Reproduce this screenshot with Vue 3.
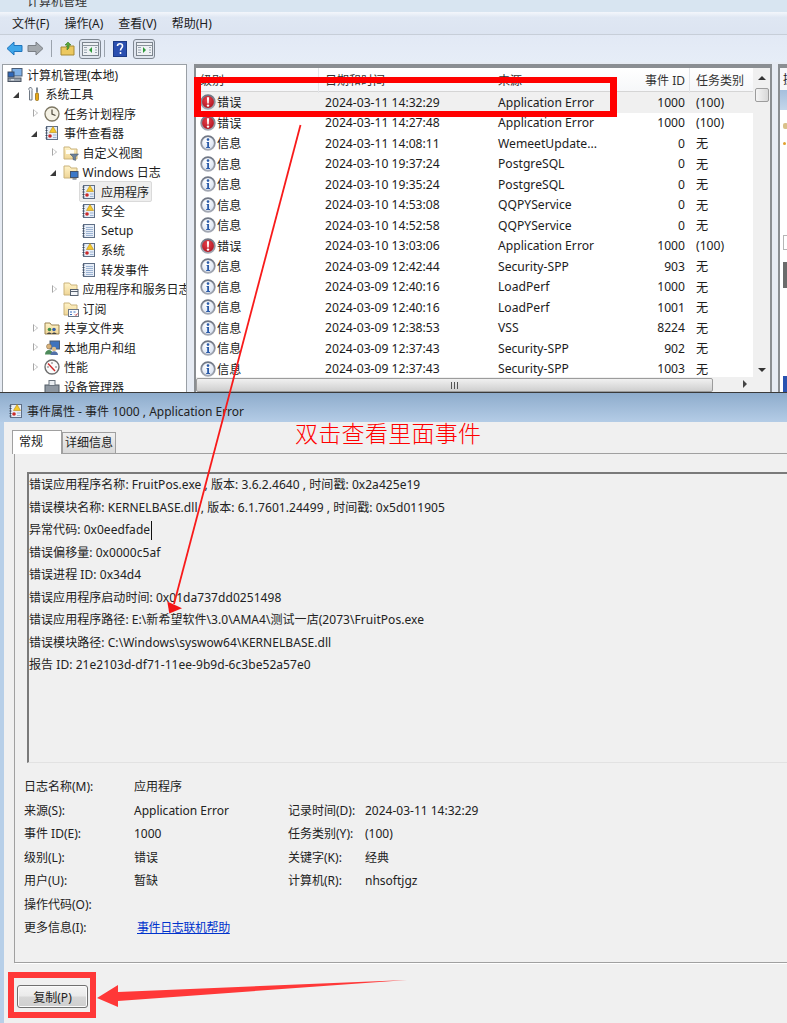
<script setup>
const tree = [
  { n: 0, arrow: '', icon: 'computer', text: '计算机管理(本地)' },
  { n: 1, arrow: 'open', icon: 'tools', text: '系统工具' },
  { n: 2, arrow: 'closed', icon: 'clock', text: '任务计划程序' },
  { n: 2, arrow: 'open', icon: 'logwarn', text: '事件查看器' },
  { n: 3, arrow: 'closed', icon: 'folderf', text: '自定义视图' },
  { n: 3, arrow: 'open', icon: 'folderw', text: 'Windows 日志' },
  { n: 4, arrow: '', icon: 'logwarn', text: '应用程序', selected: true },
  { n: 4, arrow: '', icon: 'logwarn', text: '安全' },
  { n: 4, arrow: '', icon: 'log', text: 'Setup' },
  { n: 4, arrow: '', icon: 'logwarn', text: '系统' },
  { n: 4, arrow: '', icon: 'log', text: '转发事件' },
  { n: 3, arrow: 'closed', icon: 'folderp', text: '应用程序和服务日志' },
  { n: 3, arrow: '', icon: 'folders', text: '订阅' },
  { n: 2, arrow: 'closed', icon: 'share', text: '共享文件夹' },
  { n: 2, arrow: 'closed', icon: 'users', text: '本地用户和组' },
  { n: 2, arrow: 'closed', icon: 'perf', text: '性能' },
  { n: 2, arrow: '', icon: 'device', text: '设备管理器' }
]
const E = '错误', I = '信息', A = 'Application Error', N = '无', H = '(100)'
const rows = [
  [E, '2024-03-11 14:32:29', A, 1000, H],
  [E, '2024-03-11 14:27:48', A, 1000, H],
  [I, '2024-03-11 14:08:11', 'WemeetUpdate...', 0, N],
  [I, '2024-03-10 19:37:24', 'PostgreSQL', 0, N],
  [I, '2024-03-10 19:35:24', 'PostgreSQL', 0, N],
  [I, '2024-03-10 14:53:08', 'QQPYService', 0, N],
  [I, '2024-03-10 14:52:58', 'QQPYService', 0, N],
  [E, '2024-03-10 13:03:06', A, 1000, H],
  [I, '2024-03-09 12:42:44', 'Security-SPP', 903, N],
  [I, '2024-03-09 12:40:16', 'LoadPerf', 1000, N],
  [I, '2024-03-09 12:40:16', 'LoadPerf', 1001, N],
  [I, '2024-03-09 12:38:53', 'VSS', 8224, N],
  [I, '2024-03-09 12:37:43', 'Security-SPP', 902, N],
  [I, '2024-03-09 12:37:43', 'Security-SPP', 1003, N]
]
const lines = [
  '错误应用程序名称: FruitPos.exe , 版本: 3.6.2.4640 , 时间戳: 0x2a425e19',
  '错误模块名称: KERNELBASE.dll , 版本: 6.1.7601.24499 , 时间戳: 0x5d011905',
  '异常代码: 0x0eedfade',
  '错误偏移量: 0x0000c5af',
  '错误进程 ID: 0x34d4',
  '错误应用程序启动时间: 0x01da737dd0251498',
  '错误应用程序路径: E:\\新希望软件\\3.0\\AMA4\\测试一店(2073\\FruitPos.exe',
  '错误模块路径: C:\\Windows\\syswow64\\KERNELBASE.dll',
  '报告 ID: 21e2103d-df71-11ee-9b9d-6c3be52a57e0'
]
const fields = [
  ['日志名称(M):', '应用程序', '', ''],
  ['来源(S):', A, '记录时间(D):', '2024-03-11 14:32:29'],
  ['事件 ID(E):', '1000', '任务类别(Y):', H],
  ['级别(L):', E, '关键字(K):', '经典'],
  ['用户(U):', '暂缺', '计算机(R):', 'nhsoftjgz'],
  ['操作代码(O):', '', '', '']
]
</script>

<template>
  <div class="page">
    <svg class="sprites" width="0" height="0" aria-hidden="true">
      <defs>
        <radialGradient id="gi" cx="40%" cy="35%" r="70%"><stop offset="0" stop-color="#ffffff"/><stop offset="1" stop-color="#d5dff0"/></radialGradient>
        <radialGradient id="ge" cx="45%" cy="35%" r="70%"><stop offset="0" stop-color="#e8404a"/><stop offset="1" stop-color="#a80f1c"/></radialGradient>
        <linearGradient id="gf" x1="0" y1="0" x2="0" y2="1"><stop offset="0" stop-color="#fff3c8"/><stop offset="1" stop-color="#efd596"/></linearGradient>
        <linearGradient id="gr" x1="0" y1="0" x2="0" y2="1"><stop offset="0" stop-color="#6f7684"/><stop offset="1" stop-color="#a4a9b4"/></linearGradient>
      </defs>
      <symbol id="s-info" viewBox="0 0 16 16">
        <circle cx="8" cy="8" r="6.800" fill="url(#gi)" stroke="url(#gr)" stroke-width="1.800"/>
        <circle cx="8" cy="4.600" r="1.300" fill="#2a5aa8"/>
        <path d="M6.600 7h2.400v5h1v1H6.200v-1h1V8H6.600z" fill="#2a5aa8"/>
      </symbol>
      <symbol id="s-error" viewBox="0 0 16 16">
        <circle cx="8" cy="8" r="6.800" fill="url(#ge)" stroke="url(#gr)" stroke-width="1.800"/>
        <path d="M6.900 3.200h2.200L8.700 9.400H7.300z" fill="#fff"/>
        <circle cx="8" cy="11.600" r="1.200" fill="#fff"/>
      </symbol>
      <symbol id="s-log" viewBox="0 0 16 16">
        <rect x="2.500" y="1.500" width="11" height="13" fill="#e6edf7" stroke="#5f6f86"/>
        <path d="M1.500 3h2M1.500 5.500h2M1.500 8h2M1.500 10.500h2M1.500 13h2" stroke="#39465a"/>
        <path d="M5 4.500h7M5 6.500h7M5 8.500h7M5 10.500h7M5 12.500h7" stroke="#9db4d3"/>
      </symbol>
      <symbol id="s-logwarn" viewBox="0 0 16 16">
        <rect x="2.500" y="1.500" width="11" height="13" fill="#e6edf7" stroke="#5f6f86"/>
        <path d="M1.500 3h2M1.500 5.500h2M1.500 8h2M1.500 10.500h2M1.500 13h2" stroke="#39465a"/>
        <path d="M9 1.500l3.500 6h-7z" fill="#f4c92c" stroke="#b98a12" stroke-width=".6"/>
        <circle cx="6" cy="11" r="1.800" fill="#c92a2a"/>
        <path d="M9 10h3.500M9 12.500h3.500" stroke="#9db4d3"/>
      </symbol>
      <symbol id="s-folderf" viewBox="0 0 16 16">
        <path d="M1 2h5.500L8 4h6v10H1z" fill="url(#gf)" stroke="#c9b27a"/>
        <path d="M3 5h8v4H3z" fill="#fffdf3"/>
        <path d="M7 9h8.500l-3 3v3.500l-2.500-1V12z" fill="#6d8299" stroke="#3e4f60" stroke-width=".5"/>
      </symbol>
      <symbol id="s-folderw" viewBox="0 0 16 16">
        <path d="M1 2h5.500L8 4h6v10H1z" fill="url(#gf)" stroke="#c9b27a"/>
        <rect x="7.500" y="7.500" width="7.500" height="6" fill="#3c78c8" stroke="#44526a"/>
        <path d="M9.500 15h4" stroke="#44526a"/>
      </symbol>
      <symbol id="s-folderp" viewBox="0 0 16 16">
        <path d="M1 2h5.500L8 4h6v10H1z" fill="url(#gf)" stroke="#c9b27a"/>
        <rect x="7.500" y="8.500" width="7.500" height="6" fill="#f2f4f7" stroke="#55606e"/>
        <path d="M7.500 10.500h7.500" stroke="#55606e"/>
      </symbol>
      <symbol id="s-folders" viewBox="0 0 16 16">
        <path d="M1 2h5.500L8 4h6v10H1z" fill="url(#gf)" stroke="#c9b27a"/>
        <rect x="5.500" y="8.500" width="10" height="7" fill="#fbfbfd" stroke="#6d7787"/>
        <path d="M7 11h2M10.500 11h2M7 13.500h2" stroke="#3a6fc0"/>
        <path d="M12 13.500l1 1 1.500-2" stroke="#c03a3a" fill="none"/>
      </symbol>
      <symbol id="s-computer" viewBox="0 0 16 16">
        <rect x="5" y="1.500" width="10" height="7.500" fill="#7fb0e6" stroke="#4a5c75"/>
        <rect x="1" y="5" width="6" height="5" fill="#2f67b8" stroke="#3d4b60"/>
        <rect x="1" y="11" width="13" height="3.500" fill="#9aa3ae" stroke="#4a5463"/>
        <path d="M4 12.800h3" stroke="#eef1f5"/>
      </symbol>
      <symbol id="s-tools" viewBox="0 0 16 16">
        <path d="M4 1.500c2 0 2.500 1.500 2 3v9.500H3.500V4.500C2.500 3.500 2.500 2 4 1.500z" fill="#f4f6f8" stroke="#6f7884"/>
        <path d="M11 1.500v5" stroke="#7f8a96" stroke-width="2"/>
        <rect x="9.500" y="7" width="3" height="7.500" rx="1" fill="#e8a916" stroke="#8a6410" stroke-width=".7"/>
      </symbol>
      <symbol id="s-clock" viewBox="0 0 16 16">
        <circle cx="8" cy="8" r="7" fill="#f4f1e4" stroke="#7d7763" stroke-width="1.300"/>
        <path d="M8 3.500V8l3.500 1.500" fill="none" stroke="#4e4a3d" stroke-width="1.200"/>
      </symbol>
      <symbol id="s-share" viewBox="0 0 16 16">
        <path d="M1 3h5l1.500 2H15v9H1z" fill="url(#gf)" stroke="#9b8350"/>
        <circle cx="5.500" cy="9.500" r="1.800" fill="#3f8f4a"/>
        <circle cx="10" cy="9.500" r="1.800" fill="#355fa8"/>
        <path d="M3 14c.5-2 4-2 4.500 0M8 14c.5-2 4-2 4.500 0" fill="#444"/>
      </symbol>
      <symbol id="s-users" viewBox="0 0 16 16">
        <rect x="6" y="1" width="9.500" height="8" fill="#3f73bd" stroke="#4a5c75"/>
        <circle cx="5" cy="6.500" r="2.500" fill="#d9b27a" stroke="#7a6240" stroke-width=".5"/>
        <path d="M1 14.500c0-6 8-6 8 0z" fill="#4d8a5a"/>
        <circle cx="10" cy="9" r="2.200" fill="#e0c08c"/>
        <path d="M6.500 15c0-5 7.500-5 7.500 0z" fill="#5472a8"/>
      </symbol>
      <symbol id="s-perf" viewBox="0 0 16 16">
        <circle cx="8" cy="8" r="7" fill="#fafafa" stroke="#6e6e6e" stroke-width="1.400"/>
        <path d="M4 4.500L11 12" stroke="#d02a2a" stroke-width="1.400"/>
        <path d="M8 3v2M3 8h2M13 8h-2" stroke="#777"/>
      </symbol>
      <symbol id="s-device" viewBox="0 0 16 16">
        <rect x="1" y="6" width="14" height="9" fill="#8f98a2" stroke="#515a64"/>
        <rect x="5" y="1.500" width="6" height="5" fill="#e9edf1" stroke="#6b747e"/>
      </symbol>
    </svg>

    <div class="title">计算机管理</div>

    <nav class="menu">
      <span>文件(F)</span><span>操作(A)</span><span>查看(V)</span><span>帮助(H)</span>
    </nav>

    <div class="toolbar">
      <svg class="tool" width="17" height="15" viewBox="0 0 17 15"><path d="M1 7.500L8 1v3.500h8v6H8V14z" fill="#3ea6ea" stroke="#1f74bd"/></svg>
      <svg class="tool" width="17" height="15" viewBox="0 0 17 15"><path d="M16 7.500L9 1v3.500H1v6h8V14z" fill="#a3a8ad" stroke="#7a7f85"/></svg>
      <i class="tsep"></i>
      <svg class="tool" width="15" height="15" viewBox="0 0 15 15"><path d="M1 6h5l1-1h7v9H1z" fill="#ecc85f" stroke="#a78a35"/><path d="M7 9V4H5l3-3 3 3H9v3z" fill="#5aa83a" stroke="#3a7a24" stroke-width=".6"/></svg>
      <span class="tbtn"><svg width="17" height="14" viewBox="0 0 17 14"><rect x=".5" y=".5" width="16" height="13" fill="#eef1f4" stroke="#7d858e"/><path d="M.5 3.500h16" stroke="#8a929b"/><path d="M2 5.500h3M2 8h3M2 10.500h3M13 5.500h2M13 8h2M13 10.500h2" stroke="#9aa6b2"/><path d="M10 5v6L7 8z" fill="#2f9a3a"/></svg></span>
      <i class="tsep"></i>
      <svg class="tool help" width="14" height="16" viewBox="0 0 14 16"><rect x=".5" y=".5" width="13" height="15" fill="#2a4fb0" stroke="#1c3a85"/><path d="M4.500 5c0-3 5-3 5 0 0 2-2 2-2 4.500M7.500 11v2" fill="none" stroke="#fff" stroke-width="1.600"/></svg>
      <span class="tbtn"><svg width="17" height="14" viewBox="0 0 17 14"><rect x=".5" y=".5" width="16" height="13" fill="#eef1f4" stroke="#7d858e"/><path d="M.5 3.500h16" stroke="#8a929b"/><path d="M2 5.500h3M2 8h3M2 10.500h3M13 5.500h2M13 8h2M13 10.500h2" stroke="#9aa6b2"/><path d="M7 5v6l3-3z" fill="#2f9a3a"/></svg></span>
    </div>

    <div class="panes">
      <aside class="tree">
        <div v-for="row in tree" :key="row.text" class="node" :style="{ marginLeft: 4 + row.n * 18.5 + 'px' }">
          <i v-if="row.arrow" class="arrow" :class="row.arrow"></i>
          <span class="node-in" :class="{ sel: row.selected }">
            <svg class="nicon" width="16" height="16"><use :href="'#s-' + row.icon"/></svg>
            <span>{{ row.text }}</span>
          </span>
        </div>
      </aside>

      <section class="list">
        <div class="list-main">
          <div class="thead">
            <span class="c1 th">级别</span>
            <span class="c2 th">日期和时间</span>
            <span class="c3 th">来源</span>
            <span class="c4 th">事件 ID</span>
            <span class="c5 th">任务类别</span>
          </div>
          <div class="tbody">
            <div v-for="(r, i) in rows" :key="i" class="tr" :class="{ on: i === 0 }">
              <span class="c1 lvl">
                <svg width="16" height="16"><use :href="r[0] === '错误' ? '#s-error' : '#s-info'"/></svg>{{ r[0] }}
              </span>
              <span class="c2">{{ r[1] }}</span>
              <span class="c3">{{ r[2] }}</span>
              <span class="c4">{{ r[3] }}</span>
              <span class="c5">{{ r[4] }}</span>
            </div>
          </div>
          <div class="hscroll">
            <div class="hthumb"><i class="grip"></i></div>
            <i class="tri-r"></i>
          </div>
        </div>
        <div class="vscroll">
          <i class="tri-u"></i>
          <div class="vthumb"></div>
          <i class="tri-d"></i>
        </div>
      </section>

      <aside class="actions">
        <div class="ahead">操作</div>
        <div class="asel"></div>
        <i class="adot a1"></i>
        <i class="adot a3"></i>
        <i class="abox"></i>
        <i class="adot a2"></i>
        <i class="ablue"></i>
      </aside>
    </div>

    <div class="dialog">
      <div class="dtitle">
        <svg width="16" height="16"><use href="#s-logwarn"/></svg>
        <span>事件属性 - 事件 1000 , Application Error</span>
      </div>
      <div class="dbody">
        <div class="tabs">
          <span class="tab active">常规</span>
          <span class="tab">详细信息</span>
        </div>
        <div class="panel">
          <div class="desc">
            <div v-for="(l, i) in lines" :key="i" class="dline">{{ l }}<i v-if="i === 2" class="caret"></i></div>
          </div>
          <div class="fields">
            <div v-for="f in fields" :key="f[0]" class="frow">
              <span class="f1">{{ f[0] }}</span>
              <span class="f2">{{ f[1] }}</span>
              <span class="f3">{{ f[2] }}</span>
              <span>{{ f[3] }}</span>
            </div>
            <div class="frow">
              <span class="f1">更多信息(I):</span>
              <a class="link">事件日志联机帮助</a>
            </div>
          </div>
        </div>
        <div class="foot">
          <button class="copy" type="button">复制(P)</button>
        </div>
      </div>
    </div>

    <!-- annotations drawn over the screenshot -->
    <div class="redbox box1"></div>
    <div class="redbox box2"></div>
    <div class="note">双击查看里面事件</div>
    <svg class="marks" width="787" height="1023" viewBox="0 0 787 1023">
      <path d="M300.500 125L174 604" stroke="#f81a1a" stroke-width="1.800" fill="none"/>
      <path d="M169.300 613.500L167.300 601.500L182 608.300z" fill="#f31515"/>
      <path d="M97 998L118 985L118 992L407 980L118 1001L118 1007z" fill="#ff3838"/>
    </svg>
  </div>
</template>

<style>
html, body { margin: 0; background: #b7cfe8; }
</style>

<style scoped>
.page {
  position: relative;
  width: 787px;
  height: 1023px;
  overflow: hidden;
  display: flex;
  flex-direction: column;
  font-family: "Noto Sans", "Noto Sans CJK SC", sans-serif;
  font-size: 12px;
  color: #1c1c1c;
  background: #b7cfe8;
}
.sprites { position: absolute; }
.title {
  height: 12px;
  line-height: 4px;
  padding-left: 27px;
  background: #d8e5f1;
  color: #333;
  overflow: hidden;
  flex: none;
}
.menu {
  flex: none;
  height: 23px;
  display: flex;
  align-items: center;
  gap: 15px;
  padding-left: 12px;
  background: linear-gradient(#f3f6fb 0, #dfe7f3 25%, #dce4f1 100%);
  border-bottom: 1px solid #c7ced8;
  box-sizing: border-box;
}
.toolbar {
  flex: none;
  height: 27px;
  display: flex;
  align-items: center;
  padding-left: 6px;
  background: linear-gradient(#e2e9f5, #e6edf7);
  box-sizing: border-box;
}
.tool { margin-right: 4px; flex: none; }
.tool.help { margin-right: 6px; }
.tsep { width: 1px; height: 17px; background: #9ba3ad; margin: 0 8px 0 3px; flex: none; }
.tbtn {
  width: 22px; height: 20px; flex: none;
  box-sizing: border-box;
  border: 1px solid #7f8791; border-radius: 3px;
  background: #dfe5ee;
  display: flex; align-items: center; justify-content: center;
}
.panes {
  flex: none;
  height: 331px;
  display: flex;
  box-sizing: border-box;
  padding: 2px 0 0 2px;
  background: #e6ebf3;
  border-bottom: 1px solid #3a3a3a;
  overflow: hidden;
}
.tree {
  flex: none;
  width: 185px;
  height: 100%;
  box-sizing: border-box;
  border: 1px solid #9aa0a6;
  border-bottom: 0;
  background: #fff;
  overflow: hidden;
}
.node { position: relative; height: 19.500px; display: flex; align-items: center; white-space: nowrap; }
.node-in { display: inline-flex; align-items: center; gap: 4px; height: 19px; }
.node-in.sel {
  background: #eeeeee;
  border: 1px solid #dadada;
  border-radius: 2px;
  margin: 0 0 0 -2px;
  padding: 0 2px 0 1px;
  box-sizing: border-box;
  height: 21px;
}
.arrow { position: absolute; left: -13px; top: 5px; width: 0; height: 0; }
.arrow.closed {
  left: -11px;
  border-left: 5px solid #a6a6a6;
  border-top: 4.500px solid transparent;
  border-bottom: 4.500px solid transparent;
}
.arrow.closed::after {
  content: "";
  position: absolute;
  left: -4px; top: -3px;
  border-left: 3px solid #fff;
  border-top: 3px solid transparent;
  border-bottom: 3px solid transparent;
}
.arrow.open {
  top: 7px;
  border-right: 6px solid #3a3a3a;
  border-top: 6px solid transparent;
}
.nicon { flex: none; }
.list {
  flex: none;
  width: 578px;
  height: 100%;
  margin-left: 7px;
  display: flex;
  box-sizing: border-box;
  border-style: solid;
  border-width: 4px 2px 0 2px;
  border-color: #8a8e92;
  background: #fff;
  overflow: hidden;
}
.list-main { flex: none; width: 557px; display: flex; flex-direction: column; }
.thead {
  flex: none;
  height: 24px;
  display: flex;
  align-items: center;
  background: linear-gradient(#ffffff, #f6f7f9);
  border-bottom: 1px solid #d5d5d5;
  box-sizing: border-box;
  color: #333;
}
.th { position: relative; line-height: 24px; padding-top: 2px; }
.c1 { flex: none; width: 129px; padding-left: 4px; box-sizing: border-box; white-space: nowrap; }
.c2 { flex: none; width: 173px; white-space: nowrap; }
.c3 { flex: none; width: 130px; white-space: nowrap; }
.c4 { flex: none; width: 57px; text-align: right; white-space: nowrap; }
.c5 { flex: none; width: 68px; padding-left: 11px; box-sizing: border-box; white-space: nowrap; }
.th.c1::after, .th.c4::after {
  content: ""; position: absolute; top: 0; bottom: 0; width: 1px; background: #e3e5e8;
}
.th.c1::after { left: 122px; }
.th.c4::after { right: -5px; }
.tbody { flex: 1; overflow: hidden; font-size: 12.150px; }
.tr { height: 20.500px; display: flex; align-items: center; }
.tr.on { background: #f0f0f0; }
.lvl { display: inline-flex; align-items: center; gap: 1px; }
.hscroll {
  flex: none;
  position: relative;
  height: 15px;
  background: #f0f0f0;
}
.hthumb {
  width: 517px;
  height: 14px;
  margin-top: 1px;
  box-sizing: border-box;
  border: 1px solid #9c9c9c;
  border-radius: 2px;
  background: linear-gradient(#f0f0f0, #cfcfcf);
  display: flex;
  justify-content: center;
  align-items: center;
}
.grip { width: 7px; height: 7px; background: repeating-linear-gradient(90deg, #555 0 1px, transparent 1px 3px); }
.tri-r {
  position: absolute; right: 6px; top: 3px;
  border-left: 4px solid #444;
  border-top: 4px solid transparent;
  border-bottom: 4px solid transparent;
}
.vscroll {
  flex: none;
  width: 17px;
  position: relative;
  background: #f0f0f0;
}
.tri-u, .tri-d { position: absolute; left: 5px; }
.tri-u { top: 8px; border-bottom: 4px solid #333; border-left: 4px solid transparent; border-right: 4px solid transparent; }
.tri-d { top: 300px; border-top: 4px solid #333; border-left: 4px solid transparent; border-right: 4px solid transparent; }
.vthumb {
  position: absolute;
  left: 2px; top: 20px;
  width: 14px; height: 14px;
  box-sizing: border-box;
  border: 1px solid #9c9c9c;
  border-radius: 2px;
  background: linear-gradient(90deg, #f5f5f5, #d8d8d8);
}
.actions {
  flex: none;
  position: relative;
  width: 20px;
  height: 100%;
  margin-left: 6px;
  box-sizing: border-box;
  border-style: solid;
  border-color: #8a8e92;
  border-width: 4px 0 0 2px;
  background: #fff;
}
.ahead { height: 22px; line-height: 24px; padding-left: 3px; color: #222; background: #f7f8fa; white-space: nowrap; overflow: hidden; }
.asel { height: 20px; background: linear-gradient(#a5bfdd, #c3d6ea); }
.adot { position: absolute; left: 3px; width: 5px; height: 6px; border-radius: 2px; }
.a1 { top: 55px; background: #d8c08a; }
.a3 { top: 74px; width: 3px; height: 3px; background: #e0a030; }
.abox { position: absolute; left: 3px; top: 167px; width: 6px; height: 15px; box-sizing: border-box; border: 1px solid #b5b5b5; }
.a2 { top: 194px; background: #6b6b6b; height: 26px; border-radius: 0; }
.ablue { position: absolute; left: 3px; bottom: 0; width: 6px; height: 16px; background: #2a53b0; }
.dialog { flex: none; display: flex; flex-direction: column; height: 630px; }
.dtitle {
  flex: none;
  height: 29px;
  box-sizing: border-box;
  padding-top: 7px;
  display: flex;
  align-items: center;
  gap: 3px;
  padding-left: 8px;
  color: #222;
  background: linear-gradient(#8eaccc, #b4cce6);
}
.dbody {
  flex: 1;
  margin-left: 4px;
  box-sizing: border-box;
  background: #f0f0f0;
  display: flex;
  flex-direction: column;
  padding: 8px 0 0 8px;
}
.tabs { display: flex; align-items: flex-end; height: 23px; flex: none; }
.tab {
  box-sizing: border-box;
  width: 54px;
  height: 21px;
  line-height: 20px;
  text-align: center;
  background: linear-gradient(#f0f0f0, #d8d8d8);
  border: 1px solid #a0a0a0;
  border-bottom: 0;
}
.tab.active {
  width: 50px;
  height: 24px;
  line-height: 22px;
  background: #fff;
  margin-bottom: -1px;
  position: relative;
  z-index: 1;
  padding-right: 12px;
}
.panel {
  box-sizing: border-box;
  height: 510px;
  margin-left: 2px;
  margin-right: -20px;
  border: 1px solid #a0a0a0;
  background: #f0f0f0;
  padding: 18px 0 0 12px;
  box-shadow: 1px 1px 0 #fff;
}
.desc {
  box-sizing: border-box;
  height: 291px;
  border: 2px solid #7a7a7a;
  border-right: 0;
  border-bottom: 1px solid #e2e2e2;
  letter-spacing: .05px;
}
.dline { height: 22.500px; line-height: 22.500px; white-space: nowrap; position: relative; color: #222; }
.caret { display: inline-block; width: 1px; height: 19px; background: #111; vertical-align: middle; margin-left: 1px; }
.fields { padding-top: 12px; margin-left: -3px; }
.frow { height: 23.500px; line-height: 23.500px; display: flex; color: #222; white-space: nowrap; }
.f1 { flex: none; width: 110px; }
.f2 { flex: none; width: 154px; }
.f3 { flex: none; width: 77px; }
.link { color: #0033cc; text-decoration: underline; margin-left: 3px; letter-spacing: -.4px; }
.foot { padding: 22px 0 0 5px; flex: none; }
.copy {
  display: block;
  width: 71px;
  height: 23px;
  padding: 0;
  font: inherit;
  color: #222;
  border: 1px solid #707070;
  border-radius: 3px;
  background: linear-gradient(#f4f4f4 0, #ebebeb 45%, #d6d6d6 55%, #cfcfcf 100%);
  box-shadow: inset 0 0 0 1px #fbfbfb;
}
.redbox { position: absolute; box-sizing: border-box; pointer-events: none; }
.box1 { left: 194px; top: 77px; width: 423px; height: 40px; border: solid #ff0000; border-width: 6px 7px; }
.box2 { left: 8px; top: 972px; width: 88px; height: 46px; border: 6px solid #ff3838; }
.note {
  position: absolute;
  left: 295px; top: 416px;
  font-size: 23px;
  line-height: 32px;
  letter-spacing: .3px;
  color: #ff0000;
  font-family: "Noto Sans CJK SC", sans-serif;
  font-weight: 300;
  white-space: nowrap;
}
.marks { position: absolute; left: 0; top: 0; pointer-events: none; }
</style>
